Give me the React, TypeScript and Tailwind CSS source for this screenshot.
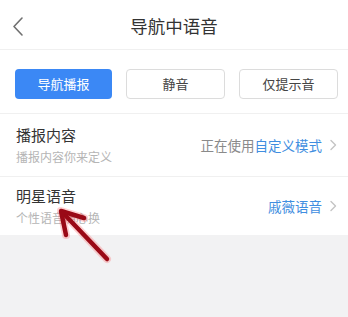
import React from "react";

const font = { fontFamily: '"Noto Sans CJK SC", "Noto Sans", sans-serif' };

function Chevron() {
  return (
    <svg width="8" height="12" viewBox="0 0 8 12" className="ml-[7px]">
      <path d="M2 1.5 L6.5 6 L2 10.5" fill="none" stroke="#c4c4c4" strokeWidth="1.4" strokeLinecap="round" strokeLinejoin="round" />
    </svg>
  );
}

export default function App() {
  return (
    <div className="relative w-[348px] h-[317px] bg-[#f2f2f3] overflow-hidden" style={font}>
      <div className="bg-white">
        <div className="relative h-[50px] flex items-center justify-center border-b border-[#f0f0f0]">
          <svg width="14" height="22" viewBox="0 0 14 22" className="absolute left-[11px] top-[16px]">
            <path d="M11 2 L3 10.5 L11 19" fill="none" stroke="#707070" strokeWidth="1.6" strokeLinecap="round" strokeLinejoin="round" />
          </svg>
          <span className="text-[17.5px] text-[#333] leading-none mt-[2px]">导航中语音</span>
        </div>
        <div className="flex gap-[14px] pl-[15px] pr-[10px] pt-[19px] pb-[14px] border-b border-[#f0f0f0]">
          <div className="flex-1 h-[30px] rounded-[4px] bg-[#3b88f5] flex items-center justify-center text-white text-[13px]">导航播报</div>
          <div className="flex-1 h-[30px] rounded-[4px] bg-white border border-[#dcdcdc] flex items-center justify-center text-[#444] text-[13px]">静音</div>
          <div className="flex-1 h-[30px] rounded-[4px] bg-white border border-[#dcdcdc] flex items-center justify-center text-[#444] text-[13px]">仅提示音</div>
        </div>
        <div className="h-[63px] flex items-center justify-between pl-[16px] pr-[11px] border-b border-[#f0f0f0]">
          <div className="flex flex-col">
            <span className="text-[15px] leading-[20px] text-[#333]">播报内容</span>
            <span className="text-[12px] leading-[16px] mt-[4px] text-[#b5b5b5]">播报内容你来定义</span>
          </div>
          <div className="flex items-center text-[13.5px]">
            <span className="text-[#8a8a8a]">正在使用</span>
            <span className="text-[#3f8ee0]">自定义模式</span>
            <Chevron />
          </div>
        </div>
        <div className="h-[58px] flex items-center justify-between pl-[16px] pr-[11px]">
          <div className="flex flex-col">
            <span className="text-[15px] leading-[20px] text-[#333]">明星语音</span>
            <span className="text-[12px] leading-[16px] mt-[4px] text-[#b5b5b5]">个性语音随心换</span>
          </div>
          <div className="flex items-center text-[13.5px]">
            <span className="text-[#3f8ee0]">戚薇语音</span>
            <Chevron />
          </div>
        </div>
      </div>
      <svg className="absolute left-0 top-0 pointer-events-none" width="348" height="317" viewBox="0 0 348 317">
        <g stroke="#ff4a4a" strokeOpacity="0.25" strokeWidth="8" fill="none" strokeLinecap="round" strokeLinejoin="round">
          <line x1="107" y1="259" x2="63" y2="213" />
          <polyline points="66,235 61,211 84,218" />
        </g>
        <g stroke="#9a0a16" strokeWidth="4.5" fill="none" strokeLinecap="round" strokeLinejoin="round">
          <line x1="107" y1="259" x2="63" y2="213" />
          <polyline points="66,235 61,211 84,218" />
        </g>
      </svg>
    </div>
  );
}
